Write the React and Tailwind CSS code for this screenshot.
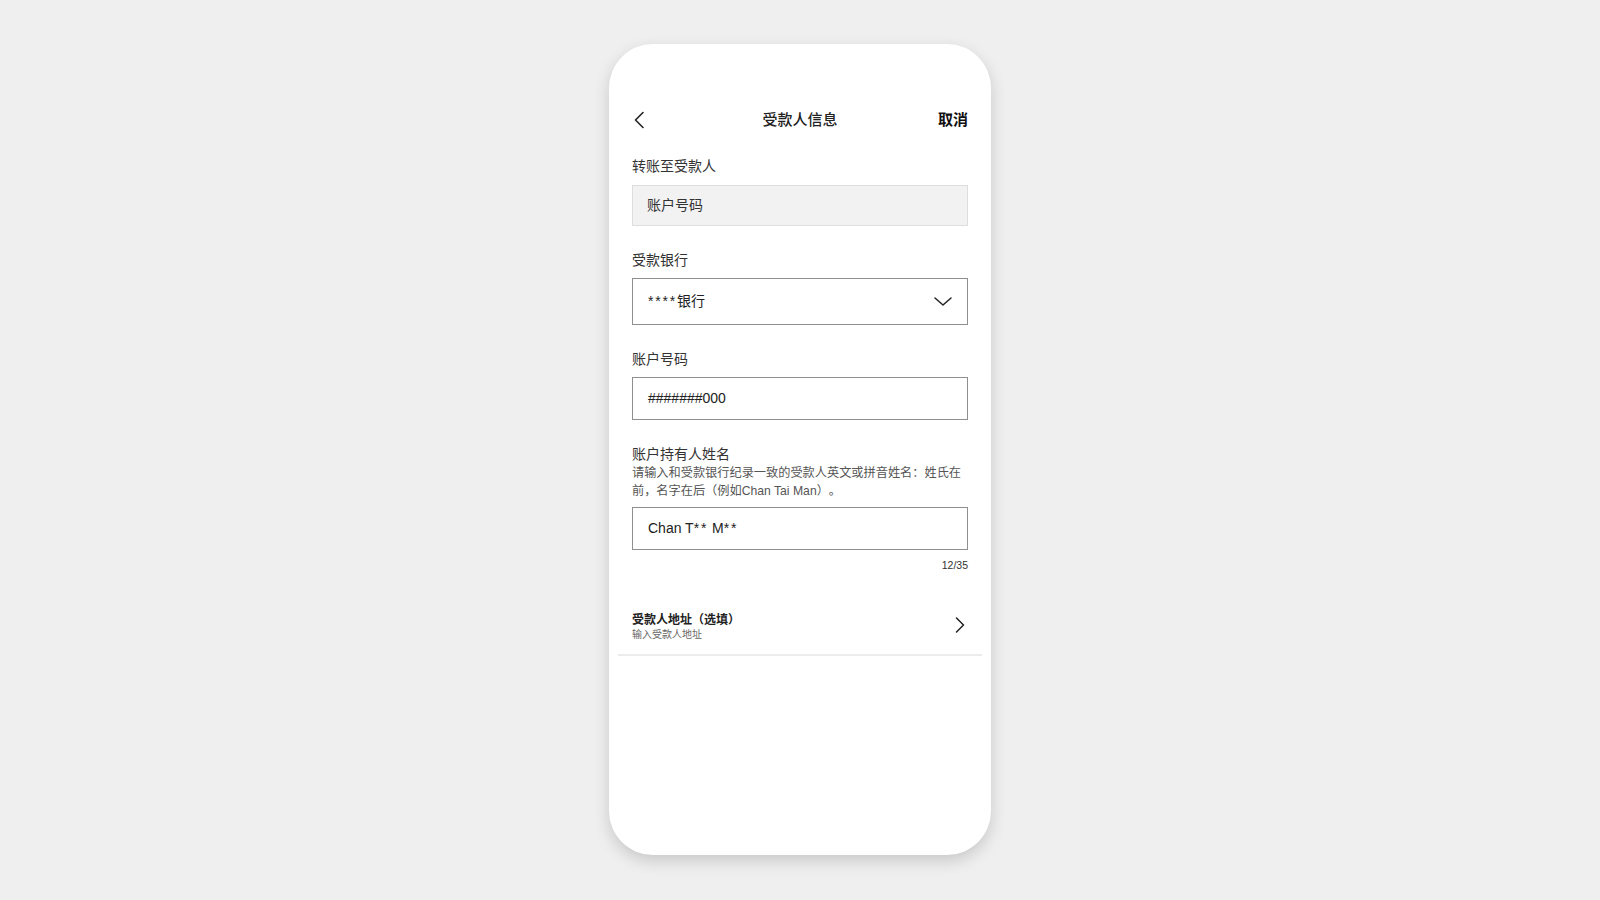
import React from "react";

const FONT = { fontFamily: '"Liberation Sans", "Noto Sans CJK SC", sans-serif' };

function Label({ children, className = "" }) {
  return (
    <div className={"text-[14px] leading-[20px] text-[#333] " + className}>{children}</div>
  );
}

function Stars({ children }) {
  return <span className="tracking-[1.8px]">{children}</span>;
}

export default function App() {
  return (
    <div
      className="w-full h-[900px] bg-[#efefef] flex justify-center pt-[44px] [text-spacing-trim:space-all]"
      style={FONT}
    >
      <div className="w-[382px] h-[811px] bg-white rounded-[44px] shadow-[0_6px_16px_rgba(0,0,0,0.16)] pt-[54px] px-[23px] flex flex-col">
        {/* Header */}
        <div className="h-[44px] flex items-center justify-between relative">
          <svg width="12" height="18" viewBox="0 0 12 18" className="ml-[1px]">
            <path d="M10 1.5 L2.5 9 L10 16.5" fill="none" stroke="#222" strokeWidth="1.6" strokeLinecap="round" strokeLinejoin="round" />
          </svg>
          <div className="absolute left-0 right-0 text-center text-[15px] font-medium text-[#222] pointer-events-none">
            受款人信息
          </div>
          <div className="text-[15px] font-bold text-[#111]">取消</div>
        </div>

        {/* 转账至受款人 */}
        <Label className="mt-[14px]">转账至受款人</Label>
        <div className="mt-[9px] h-[41px] bg-[#f2f2f2] border border-[#dedede] flex items-center pl-[14px] text-[14px] text-[#333]">
          账户号码
        </div>

        {/* 受款银行 */}
        <Label className="mt-[24px]">受款银行</Label>
        <div className="mt-[8px] h-[47px] border border-[#8f8f8f] flex items-center justify-between pl-[15px] pr-[15px] text-[14px] text-[#222]">
          <span>
            <Stars>****</Stars>银行
          </span>
          <svg width="18" height="9" viewBox="0 0 18 9">
            <path d="M1 1 L9 8 L17 1" fill="none" stroke="#222" strokeWidth="1.5" strokeLinecap="round" strokeLinejoin="round" />
          </svg>
        </div>

        {/* 账户号码 */}
        <Label className="mt-[24px]">账户号码</Label>
        <div className="mt-[8px] h-[43px] border border-[#8f8f8f] flex items-center pl-[15px] text-[14px] text-[#222]">
          #######000
        </div>

        {/* 账户持有人姓名 */}
        <Label className="mt-[24px]">账户持有人姓名</Label>
        <div className="mt-[1px] text-[12.2px] leading-[17.5px] text-[#555]">
          请输入和受款银行纪录一致的受款人英文或拼音姓名：姓氏在前，名字在后（例如Chan Tai Man）。
        </div>
        <div className="mt-[7px] h-[43px] border border-[#8f8f8f] flex items-center pl-[15px] text-[14px] text-[#222]">
          <span>
            Chan T<Stars>**</Stars> M<Stars>**</Stars>
          </span>
        </div>
        <div className="mt-[9px] text-right text-[10.5px] leading-[12px] text-[#333]">12/35</div>

        {/* 受款人地址 */}
        <div className="mt-[42px] flex items-start justify-between pb-[12px]">
          <div className="flex flex-col">
            <div className="text-[12px] leading-[15px] font-semibold text-[#222]">受款人地址（选填）</div>
            <div className="text-[10px] leading-[14px] text-[#666]">输入受款人地址</div>
          </div>
          <svg width="10" height="16" viewBox="0 0 10 16" className="mr-[3px] mt-[4px]">
            <path d="M1.5 1 L8.5 8 L1.5 15" fill="none" stroke="#222" strokeWidth="1.5" strokeLinecap="round" strokeLinejoin="round" />
          </svg>
        </div>
        <div className="-mx-[14px] h-[1.5px] bg-[#ececec]" />
      </div>
    </div>
  );
}
